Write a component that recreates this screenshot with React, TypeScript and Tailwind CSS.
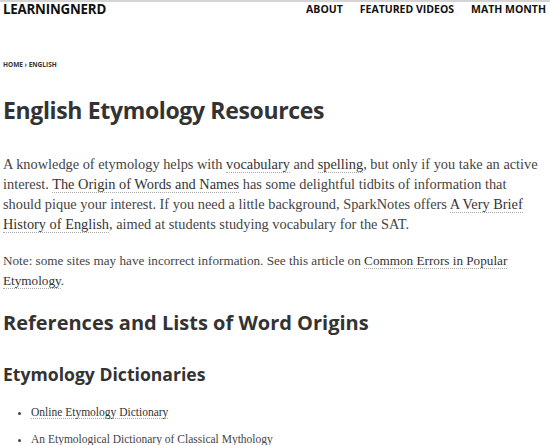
import React from "react";

const serif = { fontFamily: '"Liberation Serif", Georgia, serif' };

function L({ children }: { children: React.ReactNode }) {
  return (
    <a className="border-b border-dotted border-[#aaa] text-[#333]" href="#">
      {children}
    </a>
  );
}

export default function App() {
  return (
    <div className="w-[550px] h-[445px] overflow-hidden bg-white text-[#333] border-t-2 border-[#d4d4d4]" style={{ fontFamily: '"Open Sans", sans-serif' }}>
      <header className="flex items-center justify-between pl-[3px] pr-[4px] h-[15px]">
        <div className="text-[13.3px] font-bold text-[#111] tracking-[-0.2px]">LEARNINGNERD</div>
        <nav className="flex gap-[17px] text-[10.5px] font-bold text-[#111]">
          <span>ABOUT</span>
          <span>FEATURED VIDEOS</span>
          <span>MATH MONTH</span>
        </nav>
      </header>
      <div className="px-[3px]">
        <div className="mt-[43px] text-[6.5px] font-bold text-[#333]">HOME › ENGLISH</div>
        <h1 className="mt-[25px] text-[23px] tracking-[-0.35px] font-bold leading-[30px] text-[#333]">English Etymology Resources</h1>
        <p className="mt-[29px] text-[14.35px] leading-[20px] text-[#444]" style={serif}>
          A knowledge of etymology helps with <L>vocabulary</L> and <L>spelling</L>, but only if you take an active interest. <L>The Origin of Words and Names</L> has some delightful tidbits of information that should pique your interest. If you need a little background, SparkNotes offers <L>A Very Brief History of English</L>, aimed at students studying vocabulary for the SAT.
        </p>
        <p className="mt-[17px] text-[13.2px] leading-[20px] text-[#444]" style={serif}>
          Note: some sites may have incorrect information. See this article on <L>Common Errors in Popular Etymology</L>.
        </p>
        <h2 className="mt-[19px] text-[20px] font-bold leading-[26px] text-[#333]">References and Lists of Word Origins</h2>
        <h3 className="mt-[26px] text-[17.6px] font-bold leading-[24px] text-[#333]">Etymology Dictionaries</h3>
        <ul className="mt-[18px] list-disc pl-[28px] text-[11.5px] leading-[16px] text-[#444]" style={serif}>
          <li><L>Online Etymology Dictionary</L></li>
          <li className="mt-[11px]">An Etymological Dictionary of Classical Mythology</li>
        </ul>
      </div>
    </div>
  );
}
